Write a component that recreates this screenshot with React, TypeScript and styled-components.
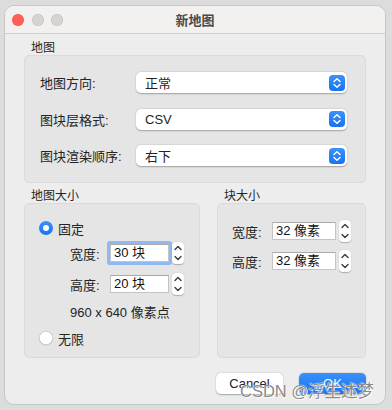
import styled, { createGlobalStyle } from 'styled-components';

const GlobalStyle = createGlobalStyle`
  html, body {
    margin: 0;
    padding: 0;
    background: #dcdcdc;
    width: 392px;
    height: 410px;
    overflow: hidden;
    font-family: "Liberation Sans", "Noto Sans CJK SC", sans-serif;
    color: #242424;
  }
`;

const Window = styled.div`
  position: relative;
  box-sizing: border-box;
  margin: 5px 0 0 4px;
  width: 382px;
  height: 400px;
  background: #ededed;
  border: 1px solid #c6c6c6;
  border-radius: 10px;
  overflow: hidden;
`;

const TitleBar = styled.div`
  display: grid;
  grid-template-columns: 1fr auto 1fr;
  align-items: center;
  height: 27px;
  background: #f3f1f0;
  border-bottom: 1px solid #cfcfcf;
`;

const Lights = styled.div`
  display: flex;
  gap: 7.5px;
  padding-left: 7px;
`;

const Light = styled.span<{ $color: string }>`
  width: 12px;
  height: 12px;
  border-radius: 50%;
  background: ${(p) => p.$color};
  box-shadow: inset 0 0 0 0.5px rgba(0, 0, 0, 0.12);
`;

const Title = styled.div`
  font-size: 13px;
  font-weight: 600;
  color: #4a4a4a;
`;

const Body = styled.div`
  padding: 8px 19px 0;
`;

const GroupLabel = styled.div`
  font-size: 12px;
  line-height: 13px;
  padding-left: 7px;
  color: #262626;
`;

const GroupBox = styled.div`
  box-sizing: border-box;
  background: #e5e5e5;
  border: 1px solid #dadada;
  border-radius: 5px;
`;

const MapBox = styled(GroupBox)`
  display: grid;
  row-gap: 15.5px;
  padding: 16px 18px 16px 15px;
`;

const MapRow = styled.div`
  display: grid;
  grid-template-columns: 96px 1fr;
  align-items: center;
  font-size: 13px;
`;

const Popup = styled.div`
  display: flex;
  align-items: center;
  height: 21px;
  padding: 0 2px 0 9px;
  background: #fff;
  border-radius: 5px;
  box-shadow: 0 0.5px 1.5px rgba(0, 0, 0, 0.3);
  font-size: 13px;
`;

const PopupArrow = styled.span`
  display: flex;
  margin-left: auto;
  width: 16px;
  height: 16px;
  border-radius: 4px;
  background: linear-gradient(#3b92fb, #1773f0);
`;

const Lower = styled.div`
  display: grid;
  grid-template-columns: 176px 149px;
  column-gap: 17px;
  margin-top: 7px;
`;

const SizeBox = styled(GroupBox)`
  display: flex;
  flex-direction: column;
  height: 155px;
  padding: 16px 10px 0 14px;
`;

const RadioRow = styled.div<{ $mt?: number }>`
  display: flex;
  align-items: center;
  gap: 5px;
  height: 16px;
  margin-top: ${(p) => p.$mt ?? 0}px;
  font-size: 13px;
`;

const Radio = styled.span<{ $on?: boolean }>`
  box-sizing: border-box;
  width: 14px;
  height: 14px;
  border-radius: 50%;
  display: flex;
  align-items: center;
  justify-content: center;
  background: ${(p) => (p.$on ? 'linear-gradient(#3b92fb, #1773f0)' : '#fff')};
  box-shadow: ${(p) =>
    p.$on ? 'none' : 'inset 0 0 0 0.5px #b3b3b3, 0 0.5px 1px rgba(0,0,0,0.15)'};

  &::after {
    content: '';
    display: ${(p) => (p.$on ? 'block' : 'none')};
    width: 6px;
    height: 6px;
    border-radius: 50%;
    background: #fff;
  }
`;

const FieldRow = styled.div<{ $mt?: number; $indent?: number }>`
  display: flex;
  align-items: center;
  height: 22px;
  margin-top: ${(p) => p.$mt ?? 0}px;
  margin-left: ${(p) => p.$indent ?? 0}px;
  font-size: 13px;
`;

const FieldLabel = styled.span`
  width: 40px;
  flex-shrink: 0;
`;

const Input = styled.div<{ $w: number; $focus?: boolean }>`
  box-sizing: border-box;
  width: ${(p) => p.$w}px;
  height: 18px;
  padding: 0 3px;
  background: #fff;
  border: 1px solid #c4c4c4;
  border-top-color: #a9a9a9;
  font-size: 13px;
  line-height: 16px;
  color: #111;
  box-shadow: ${(p) => (p.$focus ? '0 0 0 3px #8fb9f3' : 'none')};
  border-radius: ${(p) => (p.$focus ? '1px' : '0')};
`;

const StepperBox = styled.span<{ $gap: number }>`
  display: flex;
  margin-left: ${(p) => p.$gap}px;
  width: 12px;
  height: 22px;
  border-radius: 4px;
  background: #fff;
  box-shadow: 0 0.5px 1px rgba(0, 0, 0, 0.25);
`;

const Info = styled.div`
  margin: 10px 0 0 31px;
  font-size: 13px;
  line-height: 16px;
`;

const BlockBox = styled(GroupBox)`
  display: flex;
  flex-direction: column;
  gap: 8px;
  height: 155px;
  padding: 16px 10px 0 14px;
`;

const Buttons = styled.div`
  display: flex;
  justify-content: flex-end;
  gap: 16px;
  margin-top: 15px;
`;

const Button = styled.div<{ $primary?: boolean }>`
  width: 67px;
  height: 21px;
  border-radius: 5px;
  display: flex;
  align-items: center;
  justify-content: center;
  font-size: 13px;
  background: ${(p) => (p.$primary ? 'linear-gradient(#3a91fb, #1674f1)' : '#fff')};
  color: ${(p) => (p.$primary ? '#fff' : '#222')};
  box-shadow: 0 0.5px 1.5px rgba(0, 0, 0, 0.3);
`;

const Watermark = styled.div`
  position: absolute;
  left: 235px;
  top: 375px;
  font-size: 16.5px;
  line-height: 20px;
  white-space: nowrap;
  color: #8a8a8a;
  text-shadow: 0 0 1px #fff, 0 0 1px #fff, 1px 1px 0 rgba(255, 255, 255, 0.8);
`;

const Chevrons = ({ color }: { color: string }) => (
  <svg width="100%" height="100%" viewBox="0 0 16 16" fill="none">
    <path d="M5 6.5 8 3.8l3 2.7M5 9.5l3 2.7 3-2.7" stroke={color} strokeWidth="1.5" strokeLinecap="round" strokeLinejoin="round" />
  </svg>
);

const Stepper = ({ gap }: { gap: number }) => (
  <StepperBox $gap={gap}>
    <svg width="12" height="22" viewBox="0 0 12 22" fill="none">
      <path d="M3 7.5 6 4.5l3 3M3 14.5l3 3 3-3" stroke="#3a3a3a" strokeWidth="1.4" strokeLinecap="round" strokeLinejoin="round" />
    </svg>
  </StepperBox>
);

const mapRows = [
  { label: '地图方向:', value: '正常' },
  { label: '图块层格式:', value: 'CSV' },
  { label: '图块渲染顺序:', value: '右下' },
];

export default function App() {
  return (
    <>
      <GlobalStyle />
      <Window>
        <TitleBar>
          <Lights>
            <Light $color="#fe5f57" />
            <Light $color="#d6d4d3" />
            <Light $color="#d6d4d3" />
          </Lights>
          <Title>新地图</Title>
          <span />
        </TitleBar>
        <Body>
          <GroupLabel>地图</GroupLabel>
          <MapBox>
            {mapRows.map((row) => (
              <MapRow key={row.label}>
                <span>{row.label}</span>
                <Popup>
                  {row.value}
                  <PopupArrow>
                    <Chevrons color="#fff" />
                  </PopupArrow>
                </Popup>
              </MapRow>
            ))}
          </MapBox>
          <Lower>
            <div>
              <GroupLabel>地图大小</GroupLabel>
              <SizeBox>
                <RadioRow>
                  <Radio $on />
                  固定
                </RadioRow>
                <FieldRow $mt={6} $indent={31}>
                  <FieldLabel>宽度:</FieldLabel>
                  <Input $w={59} $focus>30 块</Input>
                  <Stepper gap={3} />
                </FieldRow>
                <FieldRow $mt={9} $indent={31}>
                  <FieldLabel>高度:</FieldLabel>
                  <Input $w={59}>20 块</Input>
                  <Stepper gap={3} />
                </FieldRow>
                <Info>960 x 640 像素点</Info>
                <RadioRow $mt={9}>
                  <Radio />
                  无限
                </RadioRow>
              </SizeBox>
            </div>
            <div>
              <GroupLabel>块大小</GroupLabel>
              <BlockBox>
                <FieldRow>
                  <FieldLabel>宽度:</FieldLabel>
                  <Input $w={64}>32 像素</Input>
                  <Stepper gap={3} />
                </FieldRow>
                <FieldRow>
                  <FieldLabel>高度:</FieldLabel>
                  <Input $w={64}>32 像素</Input>
                  <Stepper gap={3} />
                </FieldRow>
              </BlockBox>
            </div>
          </Lower>
          <Buttons>
            <Button>Cancel</Button>
            <Button $primary>OK</Button>
          </Buttons>
        </Body>
        <Watermark>CSDN @浮生述梦</Watermark>
      </Window>
    </>
  );
}
